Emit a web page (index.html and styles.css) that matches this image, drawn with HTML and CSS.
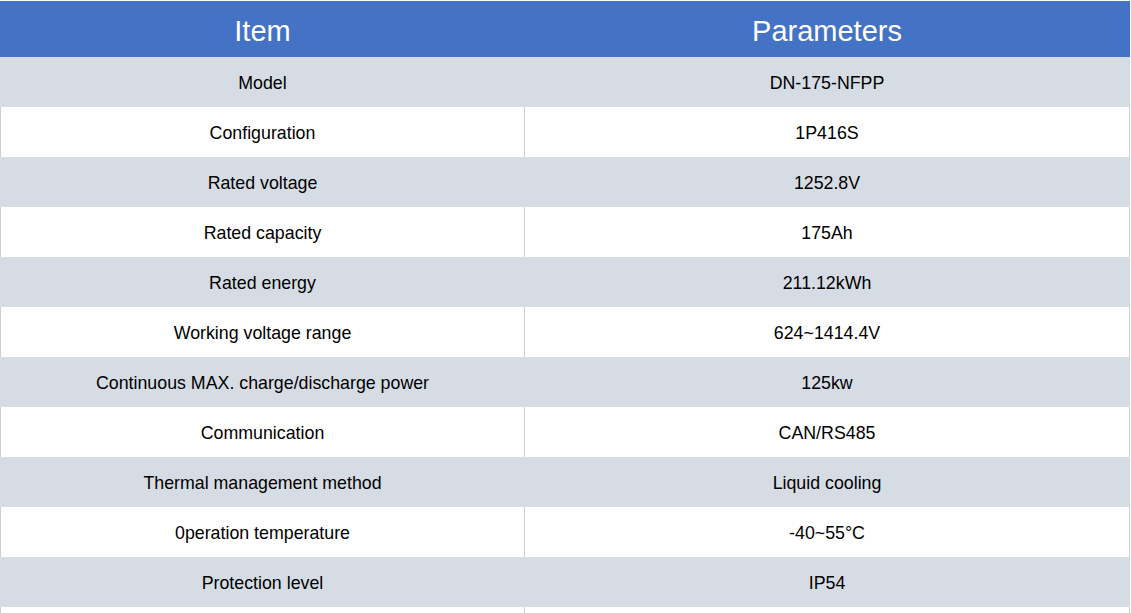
FILE: index.html
```html
<!DOCTYPE html>
<html lang="en">
<head>
<meta charset="utf-8">
<title>Specifications</title>
<link rel="stylesheet" href="styles.css">
</head>
<body>
<div class="spec">
  <div class="row head">
    <div class="cell">Item</div>
    <div class="cell">Parameters</div>
  </div>
  <div class="row grey"><div class="cell">Model</div><div class="cell">DN-175-NFPP</div></div>
  <div class="row"><div class="cell">Configuration</div><div class="cell">1P416S</div></div>
  <div class="row grey"><div class="cell">Rated voltage</div><div class="cell">1252.8V</div></div>
  <div class="row"><div class="cell">Rated capacity</div><div class="cell">175Ah</div></div>
  <div class="row grey"><div class="cell">Rated energy</div><div class="cell">211.12kWh</div></div>
  <div class="row"><div class="cell">Working voltage range</div><div class="cell">624~1414.4V</div></div>
  <div class="row grey"><div class="cell">Continuous MAX. charge/discharge power</div><div class="cell">125kw</div></div>
  <div class="row"><div class="cell">Communication</div><div class="cell">CAN/RS485</div></div>
  <div class="row grey"><div class="cell">Thermal management method</div><div class="cell">Liquid cooling</div></div>
  <div class="row"><div class="cell">0peration temperature</div><div class="cell">-40~55°C</div></div>
  <div class="row grey"><div class="cell">Protection level</div><div class="cell">IP54</div></div>
  <div class="row"><div class="cell"></div><div class="cell"></div></div>
</div>
</body>
</html>
```
FILE: styles.css
```css
html, body {
  margin: 0;
  padding: 0;
  background: #ffffff;
}
body {
  padding-top: 1px;
  font-family: "Liberation Sans", Arial, sans-serif;
  color: #000000;
}
.spec {
  width: 1130px;
}
.row {
  display: grid;
  grid-template-columns: 525px 605px;
  height: 50px;
  background: #ffffff;
}
.cell {
  display: flex;
  align-items: center;
  justify-content: center;
  font-size: 17.8px;
  padding-top: 2px;
  border-right: 1px solid #d0d0d0;
  box-sizing: border-box;
}
.cell:first-child {
  border-left: 1px solid #d0d0d0;
}
.row.grey {
  background: #d6dce4;
}
.row.grey .cell {
  border-color: #d6dce4;
}
.row.head {
  height: 56px;
  background: #4472c4;
}
.row.head .cell {
  border-color: #4472c4;
  color: #ffffff;
  font-size: 29px;
  padding-top: 4px;
}
```
